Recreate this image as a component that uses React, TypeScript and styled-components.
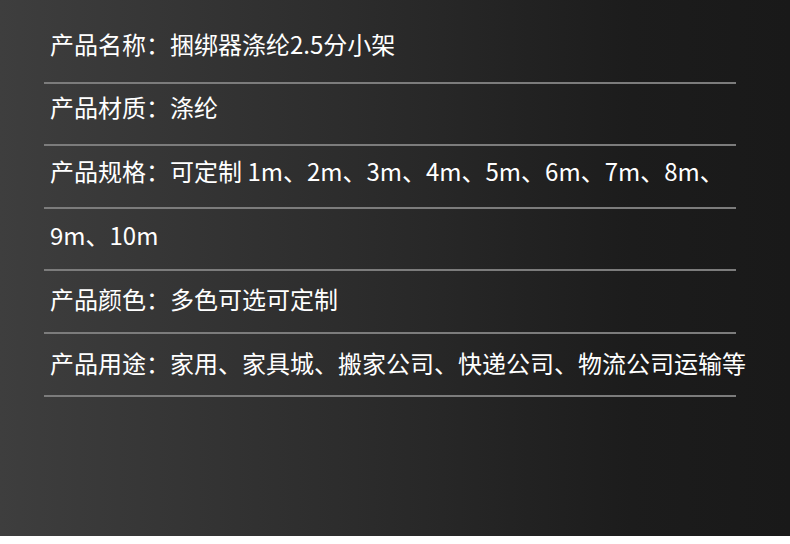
import React from "react";
import styled, { createGlobalStyle } from "styled-components";

const Global = createGlobalStyle`
  html, body { margin: 0; padding: 0; background: #ffffff; }
  #root { width: 790px; }
`;

const Panel = styled.div`
  width: 790px;
  height: 536px;
  box-sizing: border-box;
  padding: 21px 0 0 44px;
  background: linear-gradient(to right, #3e3e3e 0%, #2c2c2c 45%, #1c1c1c 80%, #191919 100%);
  font-family: "Noto Sans CJK SC", "Noto Sans", sans-serif;
  color: #ffffff;
`;

const List = styled.div`
  width: 692px;
  display: flex;
  flex-direction: column;
`;

const Row = styled.div<{ $top: number }>`
  box-sizing: border-box;
  height: 62.6px;
  padding: ${(p) => p.$top}px 0 0 6px;
  border-bottom: 2px solid #7c7c7c;
  font-size: 24px;
  line-height: 24px;
  white-space: nowrap;
`;

const rows: { text: string; top: number }[] = [
  { text: "产品名称：捆绑器涤纶2.5分小架", top: 10.5 },
  { text: "产品材质：涤纶", top: 11 },
  { text: "产品规格：可定制 1m、2m、3m、4m、5m、6m、7m、8m、", top: 13 },
  { text: "9m、10m", top: 14.5 },
  { text: "产品颜色：多色可选可定制", top: 16 },
  { text: "产品用途：家用、家具城、搬家公司、快递公司、物流公司运输等", top: 17.5 },
];

export default function App() {
  return (
    <>
      <Global />
      <Panel>
        <List>
          {rows.map((r) => (
            <Row key={r.text} $top={r.top}>
              {r.text}
            </Row>
          ))}
        </List>
      </Panel>
    </>
  );
}
